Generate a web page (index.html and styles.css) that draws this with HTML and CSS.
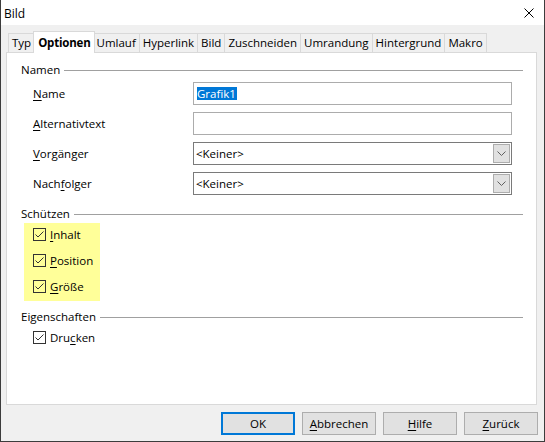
FILE: index.html
```html
<!DOCTYPE html>
<html lang="de">
<head>
<meta charset="utf-8">
<title>Bild</title>
<link rel="stylesheet" href="styles.css">
</head>
<body>
<div class="window">
  <div class="titlebar">
    <span class="title">Bild</span>
    <svg class="close" width="10" height="10" viewBox="0 0 10 10"><path d="M0.5 0.5L9.5 9.5M9.5 0.5L0.5 9.5" stroke="#000" stroke-width="1" fill="none"/></svg>
  </div>
  <div class="content">
    <div class="tabs">
      <div class="tab">Typ</div>
      <div class="tab active">Optionen</div>
      <div class="tab">Umlauf</div>
      <div class="tab">Hyperlink</div>
      <div class="tab">Bild</div>
      <div class="tab">Zuschneiden</div>
      <div class="tab">Umrandung</div>
      <div class="tab">Hintergrund</div>
      <div class="tab">Makro</div>
    </div>
    <div class="panel">
      <div class="group">
        <div class="legend"><span>Namen</span><span class="rule"></span></div>
        <div class="fields">
          <div class="field"><span class="label"><u>N</u>ame</span><div class="entry"><span class="sel">Grafik1</span></div></div>
          <div class="field"><span class="label"><u>A</u>lternativtext</span><div class="entry"></div></div>
          <div class="field"><span class="label"><u>V</u>orgänger</span><div class="combo"><span class="value">&lt;Keiner&gt;</span><span class="drop"><svg width="9" height="5" viewBox="0 0 9 5"><path d="M0.5 0.5L4.5 4.5L8.5 0.5" stroke="#606060" stroke-width="1" fill="none"/></svg></span></div></div>
          <div class="field"><span class="label">Nach<u>f</u>olger</span><div class="combo"><span class="value">&lt;Keiner&gt;</span><span class="drop"><svg width="9" height="5" viewBox="0 0 9 5"><path d="M0.5 0.5L4.5 4.5L8.5 0.5" stroke="#606060" stroke-width="1" fill="none"/></svg></span></div></div>
        </div>
      </div>
      <div class="group protect">
        <div class="legend"><span>Schützen</span><span class="rule"></span></div>
        <div class="highlight">
          <div class="check"><svg class="box" width="13" height="13" viewBox="0 0 13 13"><rect x="0.5" y="0.5" width="12" height="12" fill="none" stroke="#333"/><path d="M2.5 6.5L5 9L10.5 3.5" stroke="#333" stroke-width="1" fill="none"/></svg><span><u>I</u>nhalt</span></div>
          <div class="check"><svg class="box" width="13" height="13" viewBox="0 0 13 13"><rect x="0.5" y="0.5" width="12" height="12" fill="none" stroke="#333"/><path d="M2.5 6.5L5 9L10.5 3.5" stroke="#333" stroke-width="1" fill="none"/></svg><span><u>P</u>osition</span></div>
          <div class="check"><svg class="box" width="13" height="13" viewBox="0 0 13 13"><rect x="0.5" y="0.5" width="12" height="12" fill="none" stroke="#333"/><path d="M2.5 6.5L5 9L10.5 3.5" stroke="#333" stroke-width="1" fill="none"/></svg><span><u>G</u>röße</span></div>
        </div>
      </div>
      <div class="group props">
        <div class="legend"><span>Eigenschaften</span><span class="rule"></span></div>
        <div class="check plain"><svg class="box" width="13" height="13" viewBox="0 0 13 13"><rect x="0.5" y="0.5" width="12" height="12" fill="#fff" stroke="#333"/><path d="M2.5 6.5L5 9L10.5 3.5" stroke="#333" stroke-width="1" fill="none"/></svg><span>Dru<u>c</u>ken</span></div>
      </div>
    </div>
    <div class="buttons">
      <div class="btn default">OK</div>
      <div class="btn"><span><u>A</u>bbrechen</span></div>
      <div class="btn"><span><u>H</u>ilfe</span></div>
      <div class="btn"><span><u>Z</u>urück</span></div>
    </div>
  </div>
</div>
</body>
</html>
```

FILE: styles.css
```css
* { box-sizing: border-box; }
html, body { margin: 0; padding: 0; background: #fff; }
body {
  font-family: "Open Sans", "Noto Sans", sans-serif;
  font-size: 11.5px;
  color: #000;
}
u { text-decoration: underline; text-underline-offset: 1.5px; }

.window {
  width: 545px;
  height: 442px;
  border: 1px solid #3c3c3c;
  border-top: none;
  display: flex;
  flex-direction: column;
  background: #f0f0f0;
}
.titlebar {
  height: 25px;
  background: #fff;
  display: flex;
  align-items: center;
  justify-content: space-between;
  padding: 1px 10px 0 3px;
}
.title { font-size: 12px; }
.close { display: block; }

.content {
  flex: 1;
  display: flex;
  flex-direction: column;
  padding: 6px 6px 6px 5px;
}

.tabs {
  display: flex;
  align-items: flex-end;
  height: 21px;
  padding-left: 2px;
}
.tab {
  height: 19px;
  padding: 1px 3px 0 3px;
  line-height: 16px;
  border: 1px solid #d9d9d9;
  border-bottom: none;
  border-right: none;
  white-space: nowrap;
}
.tab:last-child { border-right: 1px solid #d9d9d9; }
.tab.active {
  height: 22px;
  margin: 0 -2px -1px -1px;
  padding: 3px 3px 0 4px;
  background: #fff;
  font-weight: bold;
  letter-spacing: -0.2px;
  border-right: 1px solid #d9d9d9;
  position: relative;
  z-index: 1;
}

.panel {
  height: 353px;
  background: #fff;
  border: 1px solid #d9d9d9;
  margin-right: 1px;
  padding: 9px 13px 0 14px;
}
.legend {
  display: flex;
  align-items: center;
  height: 16px;
  line-height: 16px;
}
.rule {
  flex: 1;
  height: 1px;
  background: #a0a0a0;
  margin-left: 4px;
}

.fields {
  display: flex;
  flex-direction: column;
  gap: 7px;
  padding: 4px 11px 0 12px;
}
.field {
  display: flex;
  align-items: center;
  height: 23px;
}
.label { width: 160px; }
.entry, .combo {
  flex: 1;
  height: 23px;
  background: #fff;
  border: 1px solid #acacac;
  display: flex;
  align-items: center;
  padding-left: 3px;
}
.combo {
  border-color: #7a7a7a;
  padding: 1px;
  padding-left: 2px;
}
.sel {
  background: #0078d7;
  color: #fff;
  line-height: 13px;
  padding: 0 1px 0 0;
}
.drop {
  margin-left: auto;
  width: 17px;
  height: 19px;
  border: 1px solid #adadad;
  background: #e1e1e1;
  display: flex;
  align-items: center;
  justify-content: center;
}
.drop svg { display: block; }

.protect { margin-top: 11px; }
.highlight {
  margin: 1px 0 0 3px;
  width: 76px;
  background: #ffff99;
  padding: 1px 0 5px 9px;
  display: flex;
  flex-direction: column;
  gap: 6px;
}
.check {
  display: flex;
  align-items: center;
  height: 20px;
  gap: 4px;
}
.box { display: block; flex: none; }
.props { margin-top: 8px; }
.check.plain { margin-top: 2px; padding-left: 12px; }

.buttons {
  margin-top: 7px;
  display: flex;
  justify-content: flex-end;
  gap: 7px;
}
.btn {
  width: 74px;
  height: 23px;
  border: 1px solid #adadad;
  background: #e1e1e1;
  display: flex;
  align-items: center;
  justify-content: center;
}
.btn.default { border: 2px solid #0078d7; }
```
